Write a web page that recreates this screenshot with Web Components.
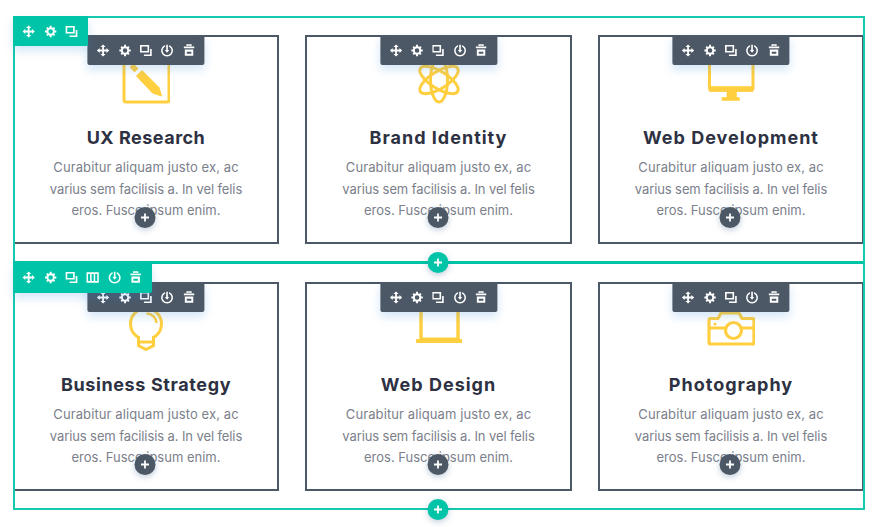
<!DOCTYPE html>
<html lang="en">
<head>
<meta charset="utf-8">
<title>Services</title>
<style>
  html, body { margin: 0; padding: 0; background: #fff; }
  body { font-family: Inter, "Liberation Sans", sans-serif; }
</style>
</head>
<body>
<builder-page>
  <builder-row tools="move,gear,copy">
    <service-card heading="UX Research" icon="pencil" style="--heading-tracking: .5px"></service-card>
    <service-card heading="Brand Identity" icon="atom"></service-card>
    <service-card heading="Web Development" icon="monitor"></service-card>
  </builder-row>
  <builder-row tools="move,gear,copy,columns,power,trash" last>
    <service-card heading="Business Strategy" icon="bulb" style="--heading-tracking: .62px"></service-card>
    <service-card heading="Web Design" icon="laptop"></service-card>
    <service-card heading="Photography" icon="camera"></service-card>
  </builder-row>
</builder-page>

<script>
const TOOL_ICONS = {
  move: '<path d="M8 .5 11.2 3.8H9.1V6.9H12.2V4.8L15.5 8 12.2 11.2V9.1H9.1V12.2H11.2L8 15.5 4.8 12.2H6.9V9.1H3.8V11.2L.5 8 3.8 4.8V6.9H6.9V3.8H4.8Z" fill="#fff"/>',
  gear: '<circle cx="8" cy="8" r="4" fill="none" stroke="#fff" stroke-width="2.4"/><path d="M6.8 1h2.4v2.6H6.8zM6.8 12.4h2.4V15H6.8zM1 6.8h2.6v2.4H1zM12.4 6.8H15v2.4h-2.6z" fill="#fff"/><path d="M2.4 4.1 4.1 2.4 6 4.3 4.3 6zM10 11.7l1.7-1.7 1.9 1.9-1.7 1.7zM2.4 11.9 4.3 10 6 11.7l-1.9 1.9zM10 4.3l1.9-1.9 1.7 1.7L11.7 6z" fill="#fff"/>',
  copy: '<path d="M1.6 2.2h9.2v7.4H1.6z" fill="none" stroke="#fff" stroke-width="2"/><path d="M14 6.2v7.6H5.4" fill="none" stroke="#fff" stroke-width="2"/>',
  columns: '<path d="M1.4 2.6h13.2v10.8H1.4zM5.8 2.6v10.8M10.2 2.6v10.8" fill="none" stroke="#fff" stroke-width="1.9"/>',
  power: '<path d="M4.8 2.6a6.4 6.4 0 1 0 6.4 0" fill="none" stroke="#fff" stroke-width="1.9" stroke-linecap="round"/><path d="M7 1h2v6.4h1.7L8 10.8 5.3 7.4H7z" fill="#fff"/>',
  trash: '<path d="M5.6 2.4V1.2h4.8v1.2" fill="none" stroke="#fff" stroke-width="1.6"/><path d="M1.6 3.2h12.8v2H1.6z" fill="#fff"/><path fill-rule="evenodd" d="M2.8 6.8h10.4v7.8H2.8zM5.2 9.4v2.6h5.6V9.4z" fill="#fff"/>'
};

const CARD_ICONS = {
  pencil: '<path d="M2 8V44a2 2 0 0 0 2 2H45a2 2 0 0 0 2-2V4" fill="none" stroke="#ffcf40" stroke-width="3"/><path d="M7.5 11 11.5 7.5 16.5 12.5 12.5 16.5Z" fill="#ffcf40"/><path d="M14.5 20 20 14.5 37 31.5 39.5 40 30.5 37Z" fill="#ffcf40" stroke="#ffcf40" stroke-linejoin="round"/>',
  atom: '<g fill="none" stroke="#ffcf40" stroke-width="3"><ellipse cx="24" cy="24" rx="22" ry="8.5" transform="rotate(90 24 24)"/><ellipse cx="24" cy="24" rx="22" ry="8.5" transform="rotate(32 24 24)"/><ellipse cx="24" cy="24" rx="22" ry="8.5" transform="rotate(-32 24 24)"/></g>',
  monitor: '<path d="M2.5 0V32a2 2 0 0 0 2 2H44a2 2 0 0 0 2-2V0" fill="none" stroke="#ffcf40" stroke-width="3"/><path d="M2.5 30.5H46V35.5H29.5V41.5H32.5V44.5H15V41.5H20V35.5H2.5Z" fill="#ffcf40" stroke="#ffcf40" stroke-width=".6" stroke-linejoin="round"/>',
  bulb: '<g fill="none" stroke="#ffcf40" stroke-width="3"><path d="M16.5 34.5A15.5 15.5 0 1 1 31.5 34.5"/><path d="M16.5 33V42.5L24 46.5 31.5 42.5V33M16.5 39H31.5"/><path d="M24.5 10.5A10 10 0 0 1 34.5 20" stroke-width="2.5"/></g>',
  laptop: '<path d="M6 0V36M43 0V36" stroke="#ffcf40" stroke-width="3.4"/><path d="M6 34.5H43V37H6Z" fill="#ffcf40"/><path d="M1.5 36.5H46.5V39.5H1.5Z" fill="#ffcf40" stroke="#ffcf40" stroke-linejoin="round"/>',
  camera: '<g fill="none" stroke="#ffcf40" stroke-width="3.2"><path d="M3.5 15.5H11L14 10H32L35 15.5H45.5A1.5 1.5 0 0 1 47 17V39.5A1.5 1.5 0 0 1 45.5 41H3.5A1.5 1.5 0 0 1 2 39.5V17A1.5 1.5 0 0 1 3.5 15.5Z"/><circle cx="26.5" cy="27.5" r="8"/><path d="M2 25H18.5M34.5 25H47"/></g><circle cx="8" cy="21" r="1.6" fill="#ffcf40"/>'
};

class ToolBar extends HTMLElement {
  connectedCallback() {
    const tools = (this.getAttribute('tools') || '').split(',');
    const root = this.shadowRoot || this.attachShadow({ mode: 'open' });
    root.innerHTML = `
      <style>
        :host {
          display: inline-flex;
          align-items: center;
          height: var(--bar-height, 30px);
          padding: 0 5.33px;
          background: var(--bar-bg, #4c5866);
          box-shadow: 0 5px 10px rgba(43, 135, 218, 0.2);
          border-radius: var(--bar-radius, 0 0 2px 2px);
        }
        svg {
          display: block;
          width: 13px;
          height: 13px;
          padding: 0 4.165px;
        }
      </style>
      ${tools.map(t => `<svg viewBox="0 0 16 16">${TOOL_ICONS[t]}</svg>`).join('')}
    `;
  }
}
customElements.define('tool-bar', ToolBar);

class AddButton extends HTMLElement {
  constructor() {
    super();
    this.attachShadow({ mode: 'open' }).innerHTML = `
      <style>
        :host {
          display: flex;
          align-items: center;
          justify-content: center;
          width: 21px;
          height: 21px;
          border-radius: 50%;
          background: var(--add-bg, #4c5866);
          box-shadow: 0 2px 6px rgba(43, 87, 135, 0.3);
        }
        svg { display: block; width: 9px; height: 9px; }
      </style>
      <svg viewBox="0 0 9 9"><path d="M4.5 .5v8M.5 4.5h8" stroke="#fff" stroke-width="1.8"/></svg>
    `;
  }
}
customElements.define('add-button', AddButton);

class ServiceCard extends HTMLElement {
  connectedCallback() {
    const root = this.shadowRoot || this.attachShadow({ mode: 'open' });
    root.innerHTML = `
      <style>
        :host {
          display: flex;
          flex-direction: column;
          align-items: center;
          position: relative;
          box-sizing: border-box;
          border: 2px solid #4c5866;
          padding-top: 19px;
          background: #fff;
        }
        svg.icon { display: block; width: 48px; height: 48px; }
        h4 {
          margin: 23px 0 8px;
          font: 700 18px/22px Inter, "Liberation Sans", sans-serif;
          letter-spacing: var(--heading-tracking, 1px);
          color: #2d3142;
          white-space: nowrap;
        }
        p {
          margin: 0;
          font: 400 13px/21.5px Inter, "Liberation Sans", sans-serif;
          color: #7b808b;
          text-align: center;
          white-space: nowrap;
        }
        p span { display: block; }
        p .first { letter-spacing: .1px; }
        p .second { letter-spacing: -.1px; }
        tool-bar {
          position: absolute;
          top: -2px;
          left: 50%;
          transform: translateX(-50%);
        }
        add-button {
          position: absolute;
          left: 50%;
          bottom: 14px;
          transform: translateX(-50%);
          margin-left: -1px;
        }
      </style>
      <svg class="icon" viewBox="0 0 48 48">${CARD_ICONS[this.getAttribute('icon')]}</svg>
      <h4>${this.getAttribute('heading')}</h4>
      <p><span class="first">Curabitur aliquam justo ex, ac</span> <span class="second">varius sem facilisis a. In vel felis</span> <span>eros. Fusce ipsum enim.</span></p>
      <tool-bar tools="move,gear,copy,power,trash"></tool-bar>
      <add-button></add-button>
    `;
  }
}
customElements.define('service-card', ServiceCard);

class BuilderRow extends HTMLElement {
  connectedCallback() {
    const root = this.shadowRoot || this.attachShadow({ mode: 'open' });
    const last = this.hasAttribute('last');
    root.innerHTML = `
      <style>
        :host {
          display: block;
          position: relative;
          box-sizing: border-box;
        }
        .grid {
          display: grid;
          grid-template-columns: 266px 267px 266px;
          gap: 26px;
          height: ${last ? 246 : 248}px;
          box-sizing: border-box;
          padding: ${last ? '18px 0 19px' : '19px 0 20px'};
        }
        .outline {
          position: absolute;
          inset: 0;
          box-sizing: border-box;
          border: 2px solid #14c9ad;
          ${last ? 'border-top: 0;' : 'border-bottom: 3px solid #00c4a7;'}
          pointer-events: none;
        }
        tool-bar {
          position: absolute;
          left: 0;
          top: ${last ? '-2px' : '0'};
          --bar-height: ${last ? '31px' : '30px'};
          --bar-bg: #00c4a7;
          --bar-radius: 0 0 2px 0;
          z-index: 2;
        }
        add-button {
          position: absolute;
          left: 50%;
          bottom: ${last ? '-10px' : '-9px'};
          margin-left: -1px;
          transform: translateX(-50%);
          z-index: 2;
          --add-bg: #00c4a7;
        }
      </style>
      <div class="grid"><slot></slot></div>
      <div class="outline"></div>
      <tool-bar tools="${this.getAttribute('tools')}"></tool-bar>
      <add-button></add-button>
    `;
  }
}
customElements.define('builder-row', BuilderRow);

class BuilderPage extends HTMLElement {
  constructor() {
    super();
    this.attachShadow({ mode: 'open' }).innerHTML = `
      <style>
        :host {
          display: block;
          box-sizing: border-box;
          min-height: 527px;
          padding: 16px 15px 0 13px;
        }
      </style>
      <slot></slot>
    `;
  }
}
customElements.define('builder-page', BuilderPage);
</script>
</body>
</html>
